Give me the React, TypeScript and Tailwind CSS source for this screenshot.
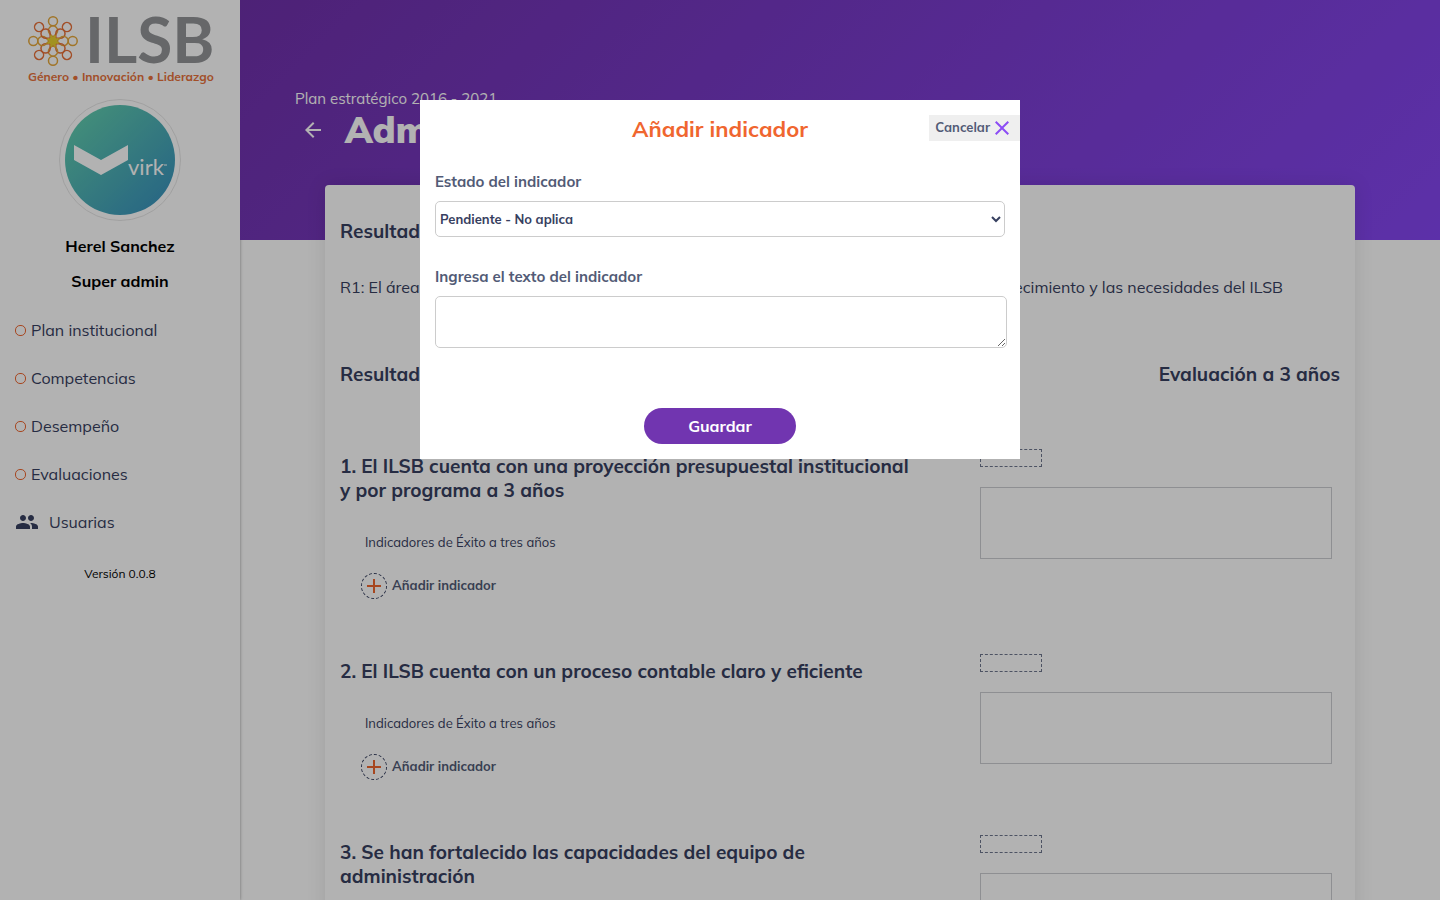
import { MdAdd, MdArrowBack, MdClose, MdPeople } from "react-icons/md";

const MENU = ["Plan institucional", "Competencias", "Desempeño", "Evaluaciones"];

const RESULTS = [
  "1. El ILSB cuenta con una proyección presupuestal institucional y por programa a 3 años",
  "2. El ILSB cuenta con un proceso contable claro y eficiente",
  "3. Se han fortalecido las capacidades del equipo de administración",
];

function Logo() {
  const angles = [0, 45, 90, 135, 180, 225, 270, 315];
  return (
    <svg
      viewBox="0 0 184 70"
      className="mx-auto h-[70px] w-[184px] overflow-visible"
      role="img"
      aria-label="ILSB"
    >
      <g fill="none" strokeWidth="1.5">
        {angles.map((a, i) => (
          <g
            key={a}
            transform={`rotate(${a} 25 27)`}
            stroke={i % 2 ? "#e8713a" : "#e6a83a"}
          >
            <circle cx="25" cy="7.3" r="4.5" />
            <path d="M21.5 19.5a4.6 4.6 0 1 1 7 0L25 23Z" />
          </g>
        ))}
      </g>
      <g stroke="#e9d22f" strokeWidth="2">
        {angles.map((a) => (
          <path key={a} d="M25 27V21" transform={`rotate(${a + 22} 25 27)`} />
        ))}
      </g>
      <circle cx="25" cy="27" r="4" fill="#e9d22f" />
      <text
        x="57"
        y="49"
        fontFamily="Lato, sans-serif"
        fontSize="64"
        fontWeight="700"
        fill="#929497"
      >
        ILSB
      </text>
      <text x="0" y="67" fontSize="12" fontWeight="700" fill="#e8713a">
        Género • Innovación • Liderazgo
      </text>
    </svg>
  );
}

function Avatar() {
  return (
    <div className="mx-auto mt-[15px] size-[122px] rounded-full border border-[#e6e6e6] p-[5px]">
      <svg viewBox="0 0 110 110" className="size-full" role="img" aria-label="virk">
        <defs>
          <linearGradient id="virk" x1="0.1" y1="0.1" x2="0.9" y2="0.9">
            <stop offset="0" stopColor="#60ccae" />
            <stop offset="1" stopColor="#3a94bd" />
          </linearGradient>
        </defs>
        <circle cx="55" cy="55" r="55" fill="url(#virk)" />
        <path d="M9 40L36 55L63 40V55L36 70L9 55Z" fill="#fff" />
        <text x="63" y="70" fontFamily="Lato, sans-serif" fontSize="22" fill="#fff">
          virk
        </text>
        <path d="M99 60h3" stroke="#fff" />
      </svg>
    </div>
  );
}

function Sidebar() {
  return (
    <aside className="w-60 shrink-0 bg-white pt-[14px] shadow-[0_0_3px_rgba(0,0,0,0.4)]">
      <Logo />
      <Avatar />
      <div className="mt-2 text-center text-base leading-[35px] font-bold text-black">
        <p>Herel Sanchez</p>
        <p>Super admin</p>
      </div>
      <nav className="mt-[7px] text-base text-[#374060]">
        {MENU.map((item) => (
          <a key={item} href="#" className="flex h-12 items-center gap-[5px] pl-[15px]">
            <span className="size-[11px] rounded-[5px] border border-[#f0662f]" />
            {item}
          </a>
        ))}
        <a href="#" className="flex h-12 items-center gap-[10px] pl-[15px]">
          <MdPeople className="size-6" />
          Usuarias
        </a>
      </nav>
      <p className="mt-5 text-center text-xs text-black">Versión 0.0.8</p>
    </aside>
  );
}

function Result({ title, index }: { title: string; index: number }) {
  return (
    <section className="flex pb-[55px]">
      <div className="w-[64%] pt-[5px] pr-[70px]">
        <h3 className="text-[19px] leading-6 font-bold">{title}</h3>
        <p className="mt-8 pl-[25px] text-[13px] leading-4">
          Indicadores de Éxito a tres años
        </p>
        <button
          type="button"
          className="mt-[23px] ml-[21px] flex items-center gap-[5px] text-[13px] font-bold text-[#525b76]"
        >
          <span className="flex size-[26px] items-center justify-center rounded-full border border-dashed border-[#374060]">
            <MdAdd className="size-6 shrink-0 text-[#f0662f]" />
          </span>
          Añadir indicador
        </button>
      </div>
      <div className="flex-1 pr-2">
        <div className="h-[18px] w-[62px] border border-dashed border-[#6f788f]" />
        <textarea
          aria-label={`Evaluación ${index + 1}`}
          className="mt-5 block h-[72px] w-full resize-none border border-[#cccdd2]"
        />
      </div>
    </section>
  );
}

function IndicatorModal() {
  return (
    <div className="fixed inset-0 flex items-start justify-center bg-black/30 pt-[100px]">
      <form
        role="dialog"
        aria-labelledby="modal-title"
        className="w-[600px] bg-white pb-[15px] text-[#525b76]"
      >
        <div className="grid grid-cols-[1fr_auto_1fr] items-start pt-[15px]">
          <h2
            id="modal-title"
            className="col-start-2 text-[22px] leading-7 font-bold text-[#f0662f]"
          >
            Añadir indicador
          </h2>
          <button
            type="button"
            className="flex h-[26px] items-center justify-self-end bg-[#efefef] px-[6px] text-[13px] font-bold"
          >
            Cancelar
            <MdClose className="size-6 text-[#8c4df5]" />
          </button>
        </div>
        <div className="px-[15px] pt-[29px]">
          <label htmlFor="status" className="block text-[15px] leading-5 font-bold">
            Estado del indicador
          </label>
          <select
            id="status"
            className="mt-[9px] block h-9 w-full rounded-[5px] border border-[#ccc] bg-white text-[13px] font-bold text-[#374060]"
          >
            <option>Pendiente - No aplica</option>
          </select>
          <label
            htmlFor="indicator"
            className="mt-[30px] block text-[15px] leading-5 font-bold"
          >
            Ingresa el texto del indicador
          </label>
          <textarea
            id="indicator"
            className="mt-[9px] block h-[52px] w-[572px] rounded-[5px] border border-[#ccc]"
          />
          <button
            type="submit"
            className="mx-auto mt-[60px] block h-9 w-[152px] rounded-full bg-[#7135b0] text-base font-bold text-white"
          >
            Guardar
          </button>
        </div>
      </form>
    </div>
  );
}

export default function App() {
  return (
    <div className="flex h-screen overflow-hidden bg-white font-['Mulish','Muli','Lato',sans-serif]">
      <Sidebar />
      <main className="flex-1 text-[#374060]">
        <header className="h-60 bg-linear-135 from-[#6f31aa] to-[#8546f2] px-[55px] pt-[88px] text-white">
          <p className="text-[15px] leading-[22px]">Plan estratégico 2016 - 2021</p>
          <div className="flex items-center gap-5 pl-[6px]">
            <a href="#" aria-label="Regresar">
              <MdArrowBack className="size-6" />
            </a>
            <h1 className="text-[36px] leading-10 font-black">Administración</h1>
          </div>
        </header>
        <div className="mx-[85px] -mt-[55px] rounded bg-white px-[15px] pt-[34px] shadow-[0_0_20px_rgba(0,0,0,0.1)]">
          <h2 className="text-[19px] leading-6 font-bold">Resultado</h2>
          <p className="mt-8 flex justify-between text-base leading-6">
            <span>R1: El área de administración</span>
            <span className="pr-[57px]">
              responde al crecimiento y las necesidades del ILSB
            </span>
          </p>
          <div className="mt-[63px] mb-[63px] flex justify-between text-[19px] leading-6 font-bold">
            <h2>Resultados</h2>
            <h2>Evaluación a 3 años</h2>
          </div>
          {RESULTS.map((title, i) => (
            <Result key={title} title={title} index={i} />
          ))}
        </div>
      </main>
      <IndicatorModal />
    </div>
  );
}
